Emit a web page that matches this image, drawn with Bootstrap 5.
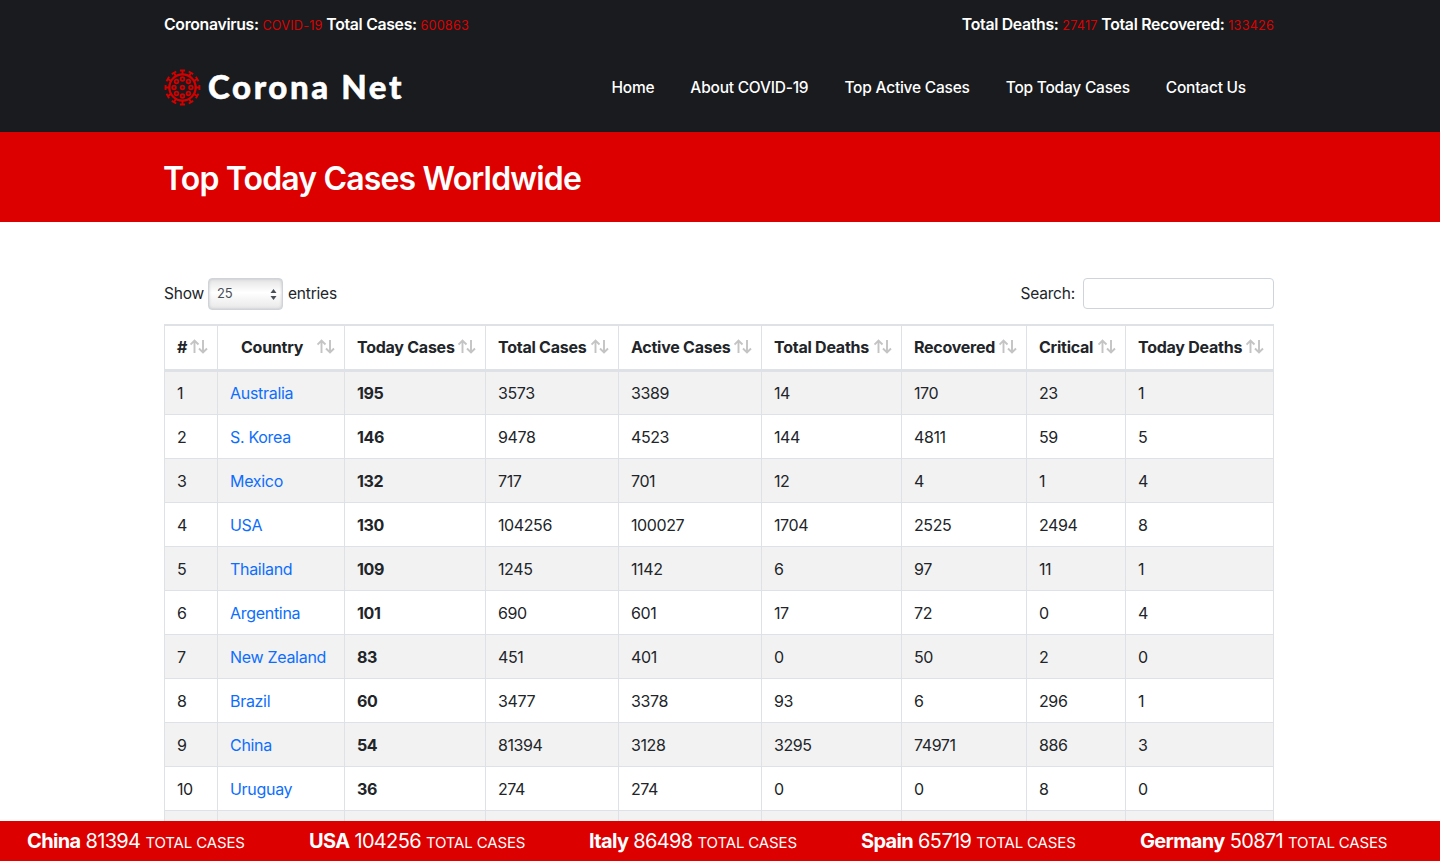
<!DOCTYPE html>
<html lang="en"><head><meta charset="utf-8">
<link href="https://cdn.jsdelivr.net/npm/bootstrap@5.3.0/dist/css/bootstrap.min.css" rel="stylesheet">
<style>
html,body{height:861px;overflow:hidden}
body{font-family:Inter,"Liberation Sans",sans-serif;font-size:16px;color:#212529;padding-bottom:0}
.wrap-main{width:1110px;margin-left:164px}
.top-shell{background:#191b1e;height:132px;padding-top:0}
.stat-line{height:50px;font-weight:600;font-size:15.8px;letter-spacing:-.3px;color:#fff;padding-top:0}
.stat-line b{font-weight:400;color:#d00;font-size:12.7px;letter-spacing:.18px}
.brand-row{height:72px;padding-top:3px}
.logo-text{font-family:Lato,sans-serif;font-weight:900;font-size:33px;letter-spacing:2.6px;color:#fff;line-height:1;-webkit-text-stroke:.5px #fff;margin-top:-2px;margin-left:-1px}
.menu-link{color:#fff;font-size:15.5px;font-weight:500;letter-spacing:-.22px;text-decoration:none;padding:0 18px}
.red-band{background:#d00;height:90px;padding-top:4px}
.red-band h1{font-size:32px;font-weight:600;letter-spacing:-.85px;color:#fff;margin:0 0 0 -1px}
.filter-row{padding-top:56px;height:102px;font-size:15.5px;letter-spacing:-.2px}
.fake-select{width:75px;height:32px;border:1px solid #ced4da;border-radius:4px;background:linear-gradient(#e4e4e4,#fff 45%,#e8e8e8);box-shadow:inset 0 0 3px #c0c0c0;font-size:13px;color:#495057;padding-left:8px;margin:0 5px 0 4px}
.fake-select svg{margin-right:5px}
.fake-input{width:191px;height:31px;border:1px solid #ced4da;border-radius:4px;margin-left:8px}
.data-tbl{width:1109px;table-layout:fixed;border-collapse:collapse;font-size:16px;letter-spacing:-.25px;margin:0}
.data-tbl th,.data-tbl td{border:1px solid #dee2e6;padding:1px 12px 0;vertical-align:middle;height:44px}
.data-tbl td{letter-spacing:-.4px}
.data-tbl thead th{height:45px;border-top-width:2px;border-bottom:3px solid #dee2e6;font-weight:700;white-space:nowrap;position:relative;padding-top:0}
.data-tbl tbody tr:nth-child(odd) td{background:#f2f2f2}
.data-tbl a{color:#0d6efd;text-decoration:none;letter-spacing:-.3px}
.data-tbl td.tc{font-weight:700}
.sort-ic{position:absolute;right:9px;top:13px}
.ticker{position:fixed;left:0;right:0;top:821px;height:40px;background:#d00;color:#fff;font-size:20px;letter-spacing:-.65px;white-space:nowrap}
.ticker b{font-weight:700}
.ticker span{font-size:15px;letter-spacing:-.15px}
.tick-item{position:absolute;top:8px;line-height:24px}
</style></head><body>
<svg width="0" height="0" class="position-absolute"><defs>
<g id="srt" fill="none" stroke="#c4c4c4" stroke-width="1.9"><path d="M4.500 14V1.500M.5 5.500L4.500 1.500 8.500 5.500"/><path d="M13 1v12.500M9 9.500L13 13.500 17 9.500"/></g>
<g id="spk" fill="none" stroke="#d40000" stroke-width="1.800"><path d="M18 1.500v4M15.500 1.500h5"/></g>
</defs></svg>
<div class="top-shell"><div class="wrap-main">
<div class="stat-line d-flex justify-content-between align-items-center">
<div>Coronavirus: <b>COVID-19</b> Total Cases: <b>600863</b></div>
<div>Total Deaths: <b>27417</b> Total Recovered: <b>133426</b></div>
</div>
<div class="brand-row d-flex justify-content-between align-items-center">
<div class="d-flex align-items-center gap-2">
<svg width="37" height="37" viewBox="0 0 36 36" fill="none" stroke="#d40000">
<circle cx="18" cy="18" r="12.800" stroke-width="2.200"/>
<use href="#spk"/><use href="#spk" transform="rotate(30 18 18)"/><use href="#spk" transform="rotate(60 18 18)"/><use href="#spk" transform="rotate(90 18 18)"/><use href="#spk" transform="rotate(120 18 18)"/><use href="#spk" transform="rotate(150 18 18)"/><use href="#spk" transform="rotate(180 18 18)"/><use href="#spk" transform="rotate(210 18 18)"/><use href="#spk" transform="rotate(240 18 18)"/><use href="#spk" transform="rotate(270 18 18)"/><use href="#spk" transform="rotate(300 18 18)"/><use href="#spk" transform="rotate(330 18 18)"/>
<g stroke-width="1.700"><circle cx="18" cy="18" r="1.800"/><circle cx="18" cy="9.800" r="1.800"/><circle cx="18" cy="26.200" r="1.800"/><circle cx="9.800" cy="18" r="1.800"/><circle cx="26.200" cy="18" r="1.800"/><circle cx="12.200" cy="12.200" r="1.800"/><circle cx="23.800" cy="12.200" r="1.800"/><circle cx="12.200" cy="23.800" r="1.800"/><circle cx="23.800" cy="23.800" r="1.800"/></g>
</svg>
<div class="logo-text">Corona Net</div>
</div>
<nav class="d-flex" style="margin-right:10px">
<a class="menu-link" href="#">Home</a><a class="menu-link" href="#">About COVID-19</a><a class="menu-link" href="#">Top Active Cases</a><a class="menu-link" href="#">Top Today Cases</a><a class="menu-link" href="#">Contact Us</a>
</nav>
</div>
</div></div>
<div class="red-band d-flex align-items-center"><div class="wrap-main"><h1>Top Today Cases Worldwide</h1></div></div>
<div class="wrap-main">
<div class="filter-row d-flex justify-content-between">
<div class="d-flex align-items-center" style="height:32px">Show<div class="fake-select d-flex align-items-center justify-content-between">25<svg width="7" height="11" viewBox="0 0 7 11"><path d="M3.500 0L6.500 4H.5zM3.500 11L.5 7h6z" fill="#495057"/></svg></div>entries</div>
<div class="d-flex align-items-center" style="height:31px">Search:<div class="fake-input"></div></div>
</div>
<table class="data-tbl" id="tb"><colgroup><col style="width:53px"><col style="width:127px"><col style="width:141px"><col style="width:133px"><col style="width:143px"><col style="width:140px"><col style="width:125px"><col style="width:99px"><col style="width:148px"></colgroup>
<thead><tr>
<th>#<svg class="sort-ic" width="18" height="15"><use href="#srt"/></svg></th>
<th style="padding-left:23px">Country<svg class="sort-ic" width="18" height="15"><use href="#srt"/></svg></th>
<th>Today Cases<svg class="sort-ic" width="18" height="15"><use href="#srt"/></svg></th>
<th>Total Cases<svg class="sort-ic" width="18" height="15"><use href="#srt"/></svg></th>
<th>Active Cases<svg class="sort-ic" width="18" height="15"><use href="#srt"/></svg></th>
<th>Total Deaths<svg class="sort-ic" width="18" height="15"><use href="#srt"/></svg></th>
<th>Recovered<svg class="sort-ic" width="18" height="15"><use href="#srt"/></svg></th>
<th>Critical<svg class="sort-ic" width="18" height="15"><use href="#srt"/></svg></th>
<th>Today Deaths<svg class="sort-ic" width="18" height="15"><use href="#srt"/></svg></th>
</tr></thead>
<tbody>
<tr><td>1</td><td><a href="#">Australia</a></td><td class="tc">195</td><td>3573</td><td>3389</td><td>14</td><td>170</td><td>23</td><td>1</td></tr>
<tr><td>2</td><td><a href="#">S. Korea</a></td><td class="tc">146</td><td>9478</td><td>4523</td><td>144</td><td>4811</td><td>59</td><td>5</td></tr>
<tr><td>3</td><td><a href="#">Mexico</a></td><td class="tc">132</td><td>717</td><td>701</td><td>12</td><td>4</td><td>1</td><td>4</td></tr>
<tr><td>4</td><td><a href="#">USA</a></td><td class="tc">130</td><td>104256</td><td>100027</td><td>1704</td><td>2525</td><td>2494</td><td>8</td></tr>
<tr><td>5</td><td><a href="#">Thailand</a></td><td class="tc">109</td><td>1245</td><td>1142</td><td>6</td><td>97</td><td>11</td><td>1</td></tr>
<tr><td>6</td><td><a href="#">Argentina</a></td><td class="tc">101</td><td>690</td><td>601</td><td>17</td><td>72</td><td>0</td><td>4</td></tr>
<tr><td>7</td><td><a href="#">New Zealand</a></td><td class="tc">83</td><td>451</td><td>401</td><td>0</td><td>50</td><td>2</td><td>0</td></tr>
<tr><td>8</td><td><a href="#">Brazil</a></td><td class="tc">60</td><td>3477</td><td>3378</td><td>93</td><td>6</td><td>296</td><td>1</td></tr>
<tr><td>9</td><td><a href="#">China</a></td><td class="tc">54</td><td>81394</td><td>3128</td><td>3295</td><td>74971</td><td>886</td><td>3</td></tr>
<tr><td>10</td><td><a href="#">Uruguay</a></td><td class="tc">36</td><td>274</td><td>274</td><td>0</td><td>0</td><td>8</td><td>0</td></tr>
<tr><td>&nbsp;</td><td></td><td></td><td></td><td></td><td></td><td></td><td></td><td></td></tr>
</tbody></table>
</div>
<div class="ticker">
<div class="tick-item" style="left:27px"><b>China</b> 81394 <span>TOTAL CASES</span></div>
<div class="tick-item" style="left:309px"><b>USA</b> 104256 <span>TOTAL CASES</span></div>
<div class="tick-item" style="left:589px"><b>Italy</b> 86498 <span>TOTAL CASES</span></div>
<div class="tick-item" style="left:861px"><b>Spain</b> 65719 <span>TOTAL CASES</span></div>
<div class="tick-item" style="left:1140px"><b>Germany</b> 50871 <span>TOTAL CASES</span></div>
</div>
<script src="https://cdn.jsdelivr.net/npm/bootstrap@5.3.0/dist/js/bootstrap.bundle.min.js"></script>
</body></html>
